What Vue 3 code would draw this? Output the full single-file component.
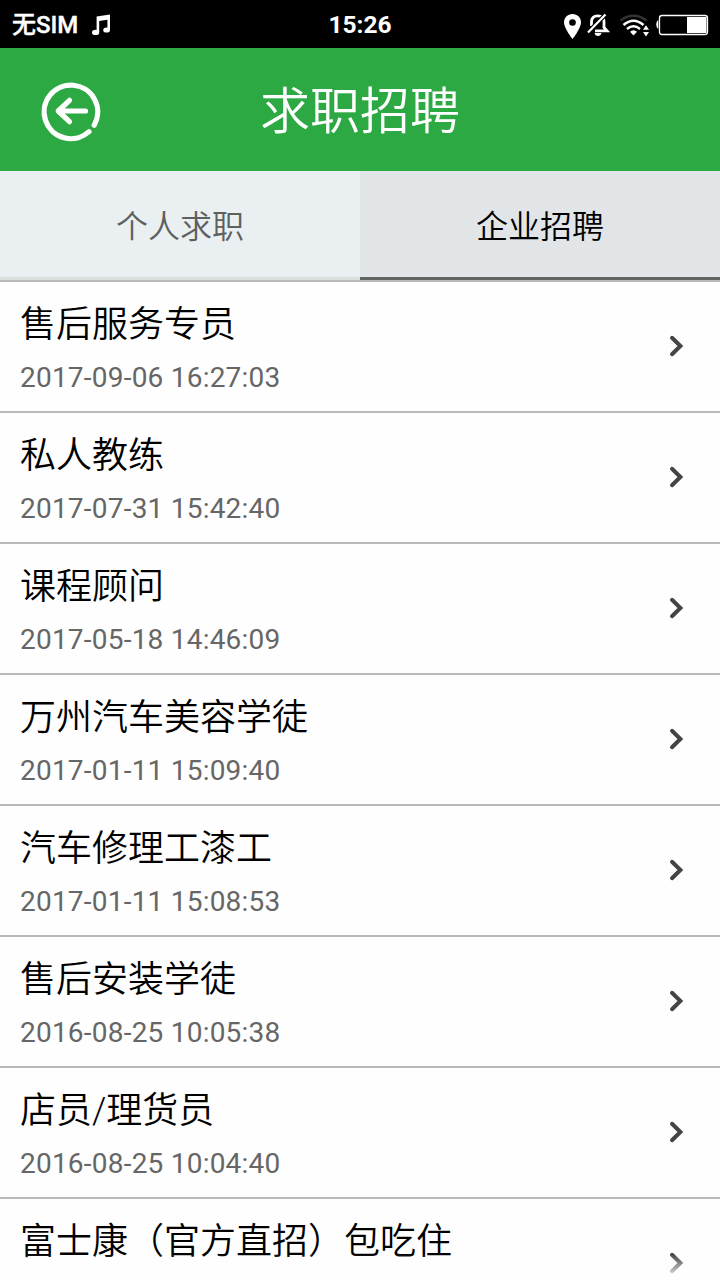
<script setup>
import { ref } from "vue";

const tabs = ["个人求职", "企业招聘"];
const activeTab = ref(1);

const jobs = [
  { title: "售后服务专员", time: "2017-09-06 16:27:03" },
  { title: "私人教练", time: "2017-07-31 15:42:40" },
  { title: "课程顾问", time: "2017-05-18 14:46:09" },
  { title: "万州汽车美容学徒", time: "2017-01-11 15:09:40" },
  { title: "汽车修理工漆工", time: "2017-01-11 15:08:53" },
  { title: "售后安装学徒", time: "2016-08-25 10:05:38" },
  { title: "店员/理货员", time: "2016-08-25 10:04:40" },
  { title: "富士康（官方直招）包吃住", time: "" }
];
</script>

<template>
  <div class="page">
    <div class="status">
      <div class="carrier">
        <span>无SIM</span>
        <svg class="note" width="20" height="22" viewBox="0 0 20 22">
          <path d="M5.6 2.4 19 0.4V15.5H16.4V5.8L8.2 7V18H5.6Z" fill="#fff" />
          <ellipse cx="4.6" cy="18.4" rx="3.6" ry="2.7" fill="#fff" />
          <ellipse cx="15.6" cy="16" rx="3.4" ry="2.6" fill="#fff" />
        </svg>
      </div>
      <span class="clock">15:26</span>
      <svg class="indicators" width="156" height="48" viewBox="0 0 156 48" fill="none">
        <!-- location -->
        <path d="M8.5 13C3.4 13 0 16.6 0 21.4 0 27 8.5 38 8.5 38S17 27 17 21.4C17 16.6 13.6 13 8.5 13Z" fill="#fff" />
        <circle cx="8.5" cy="21.5" r="3.3" fill="#000" />
        <!-- muted bell -->
        <path d="M27.5 25V21C27.5 17 30 14.8 33.8 14.8S40 17 40 21V26.5L43 29.8H31" stroke="#fff" stroke-width="2.8" />
        <path d="M30.5 32H37.5Q36.7 35 34 35T30.5 32Z" fill="#fff" />
        <path d="M24 31.5 41.5 13.5" stroke="#000" stroke-width="4.5" />
        <path d="M24 31.5 41.5 13.5" stroke="#fff" stroke-width="2.2" />
        <!-- wifi -->
        <path d="M56.5 19.5Q69.5 10 82.5 19.5" stroke="#333" stroke-width="2.4" />
        <path d="M59.5 24Q69.5 15.5 79.5 24" stroke="#fff" stroke-width="2.6" />
        <path d="M63 28Q69.5 22.5 76 28" stroke="#fff" stroke-width="2.4" />
        <path d="M66 30.8Q69.5 27.8 73 30.8L69.5 34.5Z" fill="#fff" />
        <path d="M79 28.8 82 24.3 85 28.8ZM79 31 82 35.5 85 31Z" fill="#fff" />
        <!-- battery -->
        <path d="M94.3 19.3Q92.3 20 92.3 23.5T94.3 27.7Z" fill="#fff" />
        <rect x="95.5" y="14.5" width="48" height="19" rx="2.5" stroke="#fff" stroke-width="1.3" />
        <rect x="123" y="16" width="19.5" height="16" fill="#fff" />
      </svg>
    </div>

    <header class="header">
      <svg class="back" width="60" height="60" viewBox="0 0 60 60">
        <path d="M52.2 44.2A26.8 26.8 0 1 0 47 50.7" />
        <path d="M43.5 30H17M27.5 19.3 16.2 30 27.5 40.7" />
      </svg>
      <h1>求职招聘</h1>
    </header>

    <nav class="tabs">
      <button
        v-for="(tab, i) in tabs"
        :key="tab"
        :class="{ active: i === activeTab }"
        @click="activeTab = i"
      >
        {{ tab }}
      </button>
    </nav>

    <ul class="list">
      <li v-for="job in jobs" :key="job.title">
        <div class="info">
          <div class="title">{{ job.title }}</div>
          <div class="time">{{ job.time }}</div>
        </div>
        <svg class="arrow" width="16" height="24" viewBox="0 0 16 24">
          <path d="M3 3.8 11.4 12 3 20.2" />
        </svg>
      </li>
    </ul>
    <div class="fade"></div>
  </div>
</template>

<style>
body {
  margin: 0;
  background: #fff;
}
</style>

<style scoped>
.page {
  position: relative;
  width: 720px;
  height: 1280px;
  overflow: hidden;
  background: #fefefe;
  font-family: Roboto, "Noto Sans CJK SC", sans-serif;
}

.status {
  height: 48px;
  display: grid;
  grid-template-columns: 1fr auto 1fr;
  align-items: center;
  background: #000;
  color: #fff;
  font-size: 24px;
  font-weight: 500;
  line-height: 48px;
}

.carrier {
  display: flex;
  align-items: center;
  gap: 13px;
  padding-left: 12px;
  -webkit-text-stroke: 0.4px #fff;
}

.clock {
  font-size: 24.5px;
  font-weight: 700;
  padding-top: 1px;
}

.indicators {
  justify-self: end;
}

.header {
  height: 123px;
  display: grid;
  grid-template-columns: 1fr auto 1fr;
  align-items: center;
  background: #2ca943;
  color: #fff;
}

.back {
  margin: 2px 0 0 42px;
  fill: none;
  stroke: #fff;
  stroke-width: 5.2;
  stroke-linecap: round;
  stroke-linejoin: round;
  overflow: visible;
}

.header h1 {
  height: 123px;
  margin: 0;
  padding-top: 6px;
  box-sizing: border-box;
  font-family: Roboto, "Noto Sans CJK SC DemiLight", "Noto Sans CJK SC", sans-serif;
  font-size: 50px;
  font-weight: 350;
  line-height: 116px;
}

.tabs {
  display: flex;
  border-bottom: 2px solid #b9bbba;
}

.tabs button {
  flex: 1;
  height: 109px;
  padding: 0;
  border: 0;
  border-bottom: 3px solid #d9dfdd;
  background: #eaeff2;
  color: #5c605e;
  font-family: Roboto, "Noto Sans CJK SC DemiLight", "Noto Sans CJK SC", sans-serif;
  font-size: 32px;
  font-weight: 350;
}

.tabs button.active {
  border-bottom-color: #616664;
  background: #e1e5e8;
  color: #000;
}

.list {
  margin: 0;
  padding: 0;
  list-style: none;
}

.list li {
  display: flex;
  align-items: center;
  justify-content: space-between;
  height: 129px;
  padding: 0 35px 0 20px;
  border-bottom: 2px solid #b9b9b9;
}

.title {
  height: 60px;
  color: #000;
  font-family: Roboto, "Noto Sans CJK SC DemiLight", "Noto Sans CJK SC", sans-serif;
  font-size: 36px;
  font-weight: 350;
  line-height: 60px;
}

.time {
  height: 44px;
  color: #666;
  font-size: 28px;
  letter-spacing: 0.22px;
  line-height: 46px;
}

.arrow {
  margin-bottom: 2px;
  fill: none;
  stroke: #444;
  stroke-width: 4;
  stroke-linecap: round;
}

.fade {
  position: absolute;
  left: 0;
  right: 0;
  bottom: 0;
  height: 26px;
  background: linear-gradient(rgba(254, 254, 254, 0), #fefefe);
}
</style>
